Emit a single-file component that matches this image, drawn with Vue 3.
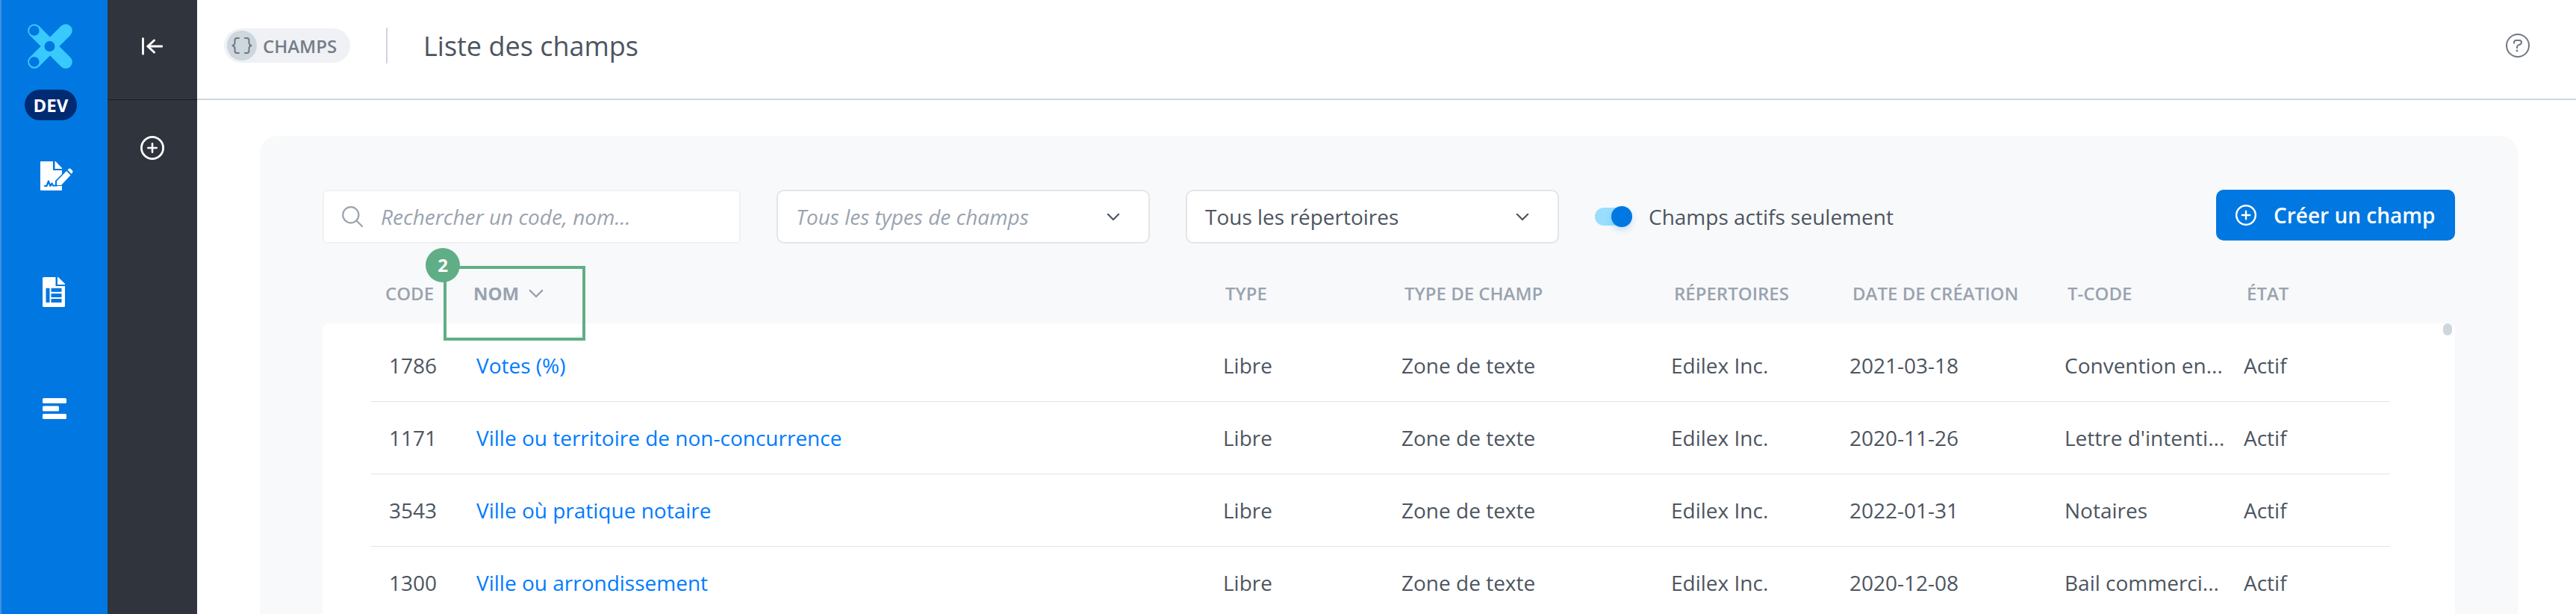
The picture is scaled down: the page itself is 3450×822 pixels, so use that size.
<script setup>
import { ref, computed } from "vue"

const search = ref("")
const activeOnly = ref(true)

const columns = [
  { key: "code", label: "CODE" },
  { key: "name", label: "NOM", sorted: true },
  { key: "type", label: "TYPE" },
  { key: "fieldType", label: "TYPE DE CHAMP" },
  { key: "directory", label: "RÉPERTOIRES" },
  { key: "created", label: "DATE DE CRÉATION" },
  { key: "tcode", label: "T-CODE" },
  { key: "state", label: "ÉTAT" },
]

const fields = ref([
  { code: "1786", name: "Votes (%)", created: "2021-03-18", tcode: "Convention en..." },
  { code: "1171", name: "Ville ou territoire de non-concurrence", created: "2020-11-26", tcode: "Lettre d'intenti..." },
  { code: "3543", name: "Ville où pratique notaire", created: "2022-01-31", tcode: "Notaires" },
  { code: "1300", name: "Ville ou arrondissement", created: "2020-12-08", tcode: "Bail commerci..." },
])

// filter on code or name
const filteredFields = computed(() => {
  const term = search.value.toLowerCase()
  return fields.value.filter((field) => {
    return field.code.includes(term) || field.name.toLowerCase().includes(term)
  })
})
</script>

<template>
  <div class="app">
    <nav class="sidebar">
      <svg class="logo" width="60" height="60" viewBox="0 0 60 60">
        <path d="M9 9L51 51M51 9L9 51" stroke="#38c9ff" stroke-width="17.5" stroke-linecap="round" />
        <circle cx="8.8" cy="9" r="6.8" fill="#0077e1" />
        <circle cx="8.8" cy="50.8" r="6.8" fill="#0077e1" />
        <circle cx="29.5" cy="30" r="7" fill="#0077e1" />
      </svg>
      <div class="env">DEV</div>
      <svg class="nav-sign" width="46" height="40" viewBox="0 0 46 40">
        <path d="M1 0H17V12H29V17L20 26V33H29V39H1Q0 39 0 38V1Q0 0 1 0Z" fill="#fff" />
        <path d="M19.5 0H20.5L29 9V10H19.5Z" fill="#fff" />
        <path d="M22 26.5L35 13L40.5 18.5L28 32H22Z" fill="#fff" />
        <path d="M36.5 11.5L38.3 9.8Q39.3 9 40.3 9.8L43.2 12.7Q44 13.7 43.2 14.7L41.7 16.8Z" fill="#fff" />
        <path d="M6 33H8.5L11 26.5L13.3 33L15.5 29.5L17 32.5H22" fill="none" stroke="#0077e1" stroke-width="2.2" stroke-linejoin="round" stroke-linecap="round" />
      </svg>
      <svg class="nav-doc" width="30" height="40" viewBox="0 0 30 40">
        <path d="M1.5 0H17.5V12H30V38.5Q30 40 28.5 40H1.5Q0 40 0 38.5V1.5Q0 0 1.5 0Z" fill="#fff" />
        <path d="M20 0H21L30 9V10H20Z" fill="#fff" />
        <path d="M4.5 14.7H9.5V34H4.5ZM11.5 14.7H25.5V19.8H11.5ZM11.5 22H25.5V27H11.5ZM11.5 29H25.5V34H11.5Z" fill="#0077e1" />
      </svg>
      <svg class="nav-list" width="32" height="28" viewBox="0 0 32 28">
        <rect width="32" height="7" rx="1.5" fill="#fff" />
        <rect y="10.5" width="22" height="7" rx="1.5" fill="#fff" />
        <rect y="21" width="32" height="7" rx="1.5" fill="#fff" />
      </svg>
    </nav>

    <aside class="drawer">
      <div class="drawer-top">
        <svg width="28" height="24" viewBox="0 0 28 24" fill="none" stroke="#fff" stroke-width="3" stroke-linecap="round">
          <path d="M1.5 1.7V22.3M27 12H8.5" stroke-width="2.8" />
          <path d="M16.5 4L8 12L16.5 20" />
        </svg>
      </div>
      <svg class="drawer-add" width="32" height="32" viewBox="0 0 32 32" fill="none" stroke="#fff" stroke-linecap="round">
        <circle cx="16" cy="16" r="14.6" stroke-width="2.8" />
        <path d="M16 10.3V21.7M10.3 16H21.7" stroke-width="2.6" />
      </svg>
    </aside>

    <main class="content">
      <header class="header">
        <div class="tag">
          <span class="tag-icon">
            <svg width="28" height="22" viewBox="0 0 28 22" fill="none" stroke="#6f7883" stroke-width="2" stroke-linecap="round" stroke-linejoin="round">
              <path d="M10 1H7.5Q4.5 1 4.5 4V8Q4.5 9.5 1.5 11Q4.5 12.5 4.5 14V18Q4.5 21 7.5 21H10" />
              <path d="M18 1H20.5Q23.5 1 23.5 4V8Q23.5 9.5 26.5 11Q23.5 12.5 23.5 14V18Q23.5 21 20.5 21H18" />
            </svg>
          </span>
          CHAMPS
        </div>
        <div class="separator"></div>
        <h1 class="title">Liste des champs</h1>
        <svg class="help" width="32" height="32" viewBox="0 0 32 32" fill="none" stroke="#6f7883" stroke-width="2">
          <circle cx="16" cy="16" r="15" />
          <path d="M11 13.5V12Q11 9 14 9H18Q21 9 21 11.5Q21 14 18 15L16.5 15.6Q15 16.3 15 18V20" />
          <circle cx="15" cy="23" r="1.4" fill="#6f7883" stroke="none" />
        </svg>
      </header>

      <section class="panel">
        <div class="filters">
          <label class="search">
            <svg width="28" height="28" viewBox="0 0 28 28" fill="none" stroke="#9aa3af" stroke-width="2.2" stroke-linecap="round">
              <circle cx="11.8" cy="11.8" r="10.6" />
              <path d="M19.3 19.3L27 27" />
            </svg>
            <input type="text" v-model="search" placeholder="Rechercher un code, nom..." />
          </label>
          <div class="select placeholder">
            Tous les types de champs
            <svg class="chevron" width="18" height="11" viewBox="0 0 18 11">
              <path d="M1.8 1.8L9 9L16.2 1.8" />
            </svg>
          </div>
          <div class="select">
            Tous les répertoires
            <svg class="chevron" width="18" height="11" viewBox="0 0 18 11">
              <path d="M1.8 1.8L9 9L16.2 1.8" />
            </svg>
          </div>
          <div class="toggle" @click="activeOnly = !activeOnly">
            <span class="track" :class="{ on: activeOnly }"><span class="knob"></span></span>
            Champs actifs seulement
          </div>
          <button class="create">
            <svg width="28" height="28" viewBox="0 0 28 28" fill="none" stroke="#fff" stroke-width="2.4" stroke-linecap="round">
              <circle cx="14" cy="14" r="12.8" />
              <path d="M14 8.8V19.2M8.8 14H19.2" />
            </svg>
            Créer un champ
          </button>
        </div>

        <div class="head grid">
          <div v-for="column in columns" :key="column.key" :class="{ sorted: column.sorted }">
            {{ column.label }}
            <svg v-if="column.sorted" class="sort" width="20" height="12" viewBox="0 0 20 12">
              <path d="M1.8 1.8L10 10L18.2 1.8" />
            </svg>
          </div>
          <div class="callout"><span class="callout-number">2</span></div>
        </div>

        <div class="table">
          <div v-for="field in filteredFields" :key="field.code" class="row grid">
            <div>{{ field.code }}</div>
            <a class="link">{{ field.name }}</a>
            <div>Libre</div>
            <div>Zone de texte</div>
            <div>Edilex Inc.</div>
            <div>{{ field.created }}</div>
            <div>{{ field.tcode }}</div>
            <div>Actif</div>
          </div>
          <div class="thumb"></div>
        </div>
      </section>
    </main>
  </div>
</template>

<style>
body {
  margin: 0;
  background: #fff;
}
</style>

<style scoped>
.app {
  display: flex;
  height: 822px;
  overflow: hidden;
  font-family: "Open Sans", sans-serif;
  font-size: 28px;
  color: #4d555f;
}

.app * {
  box-sizing: border-box;
}

svg {
  display: block;
  flex-shrink: 0;
}

.sidebar {
  width: 144px;
  flex-shrink: 0;
  background: #0077e1;
  border-left: 2px solid #3f8fe5;
}

.logo {
  margin: 32px 0 0 35px;
}

.env {
  width: 70px;
  height: 41px;
  margin: 28px 0 0 31px;
  border-radius: 21px;
  background: #002a72;
  color: #fff;
  font-size: 24px;
  font-weight: 700;
  line-height: 42px;
  text-align: center;
}

.nav-sign {
  margin: 55px 0 0 52px;
}

.nav-doc {
  margin: 115px 0 0 55px;
}

.nav-list {
  margin: 122px 0 0 55px;
}

.drawer {
  width: 120px;
  flex-shrink: 0;
  background: #30343d;
}

.drawer-top {
  height: 134px;
  padding: 50px 0 0 46px;
  border-bottom: 1px solid #1a1c22;
}

.drawer-add {
  margin: 48px 0 0 44px;
}

.content {
  flex: 1;
  min-width: 0;
}

.header {
  display: flex;
  align-items: center;
  height: 134px;
  padding: 0 62px 10px 36px;
  border-bottom: 2px solid #ced6de;
}

.tag {
  display: flex;
  align-items: center;
  gap: 8px;
  width: 169px;
  height: 46px;
  padding-left: 4px;
  border-radius: 23px;
  background: #eff1f5;
  color: #747d88;
  font-size: 24px;
  font-weight: 600;
}

.tag-icon {
  display: flex;
  align-items: center;
  justify-content: center;
  width: 40px;
  height: 40px;
  border-radius: 50%;
  background: #ced6de;
}

.separator {
  width: 2px;
  height: 48px;
  margin: 0 48px;
  background: #ced6de;
}

.title {
  margin: 0;
  font-size: 36px;
  font-weight: 400;
}

.help {
  margin-left: auto;
}

.panel {
  height: 640px;
  margin: 48px 78px 0 84px;
  padding: 72px 84px 0;
  border-radius: 24px 24px 0 0;
  background: #f8f9fb;
}

.filters {
  display: flex;
  align-items: flex-start;
  height: 72px;
}

.search {
  display: flex;
  align-items: center;
  gap: 24px;
  width: 560px;
  height: 72px;
  padding: 0 24px;
  border: 2px solid #eff1f5;
  border-radius: 6px;
  background: #fff;
}

.search input {
  flex: 1;
  min-width: 0;
  padding: 0;
  border: 0;
  outline: 0;
  background: none;
  font: inherit;
  color: inherit;
}

.search input::placeholder {
  color: #9aa3af;
  font-style: italic;
}

.select {
  display: flex;
  align-items: center;
  justify-content: space-between;
  width: 500px;
  height: 72px;
  margin-left: 48px;
  padding: 0 38px 0 24px;
  border: 2px solid #e2e6ea;
  border-radius: 10px;
  background: #fff;
}

.placeholder {
  color: #9aa3af;
  font-style: italic;
}

.chevron {
  fill: none;
  stroke: #4d555f;
  stroke-width: 2.2;
  stroke-linecap: round;
}

.toggle {
  display: flex;
  align-items: center;
  gap: 24px;
  height: 72px;
  margin-left: 48px;
}

.track {
  display: flex;
  align-items: center;
  width: 48px;
  height: 24px;
  border-radius: 12px;
  background: #ced6de;
}

.track.on {
  justify-content: flex-end;
  background: #99defd;
}

.knob {
  width: 28px;
  height: 28px;
  margin-right: -2px;
  flex-shrink: 0;
  border-radius: 50%;
  background: #0077e1;
  box-shadow: 0 4px 8px rgba(0, 119, 225, 0.2);
}

.create {
  display: flex;
  align-items: center;
  gap: 23px;
  width: 320px;
  height: 68px;
  margin-left: auto;
  padding: 0 0 0 26px;
  border: 0;
  border-radius: 10px;
  background: #0077e1;
  color: #fff;
  font: inherit;
  font-weight: 600;
}

.grid {
  display: grid;
  align-items: center;
  white-space: nowrap;
}

.head {
  position: relative;
  z-index: 1;
  grid-template-columns: 118px 1007px 240px 361px 239px 288px 240px 1fr;
  height: 107px;
  padding: 28px 0 0 84px;
  align-items: start;
  color: #9aa3af;
  font-size: 24px;
  font-weight: 600;
}

.head > div {
  line-height: 77px;
}

.head > .sorted {
  display: flex;
  align-items: center;
  gap: 13px;
  font-weight: 700;
}

.sort {
  fill: none;
  stroke: #9aa3af;
  stroke-width: 2.4;
  stroke-linecap: round;
}

/* marker drawn over the sorted column */
.callout {
  position: absolute;
  left: 162px;
  top: 30px;
  width: 190px;
  height: 100px;
  border: 4px solid #60ae85;
}

.callout-number {
  position: absolute;
  left: -28px;
  top: -28px;
  width: 46px;
  height: 46px;
  border-radius: 50%;
  background: #60ae85;
  color: #fff;
  font-size: 24px;
  font-weight: 700;
  line-height: 46px;
  text-align: center;
}

.table {
  position: relative;
  height: 400px;
  padding: 8px 87px 0 65px;
  border-radius: 8px 8px 0 0;
  background: #fff;
}

.row {
  grid-template-columns: 117px 1000px 239px 361px 239px 288px 240px 1fr;
  height: 97px;
  padding-left: 24px;
  border-bottom: 1px solid #e2e6ea;
}

.link {
  color: #007bff;
}

.thumb {
  position: absolute;
  top: 0;
  right: 4px;
  width: 12px;
  height: 16px;
  border-radius: 6px;
  background: #ced6de;
}
</style>
